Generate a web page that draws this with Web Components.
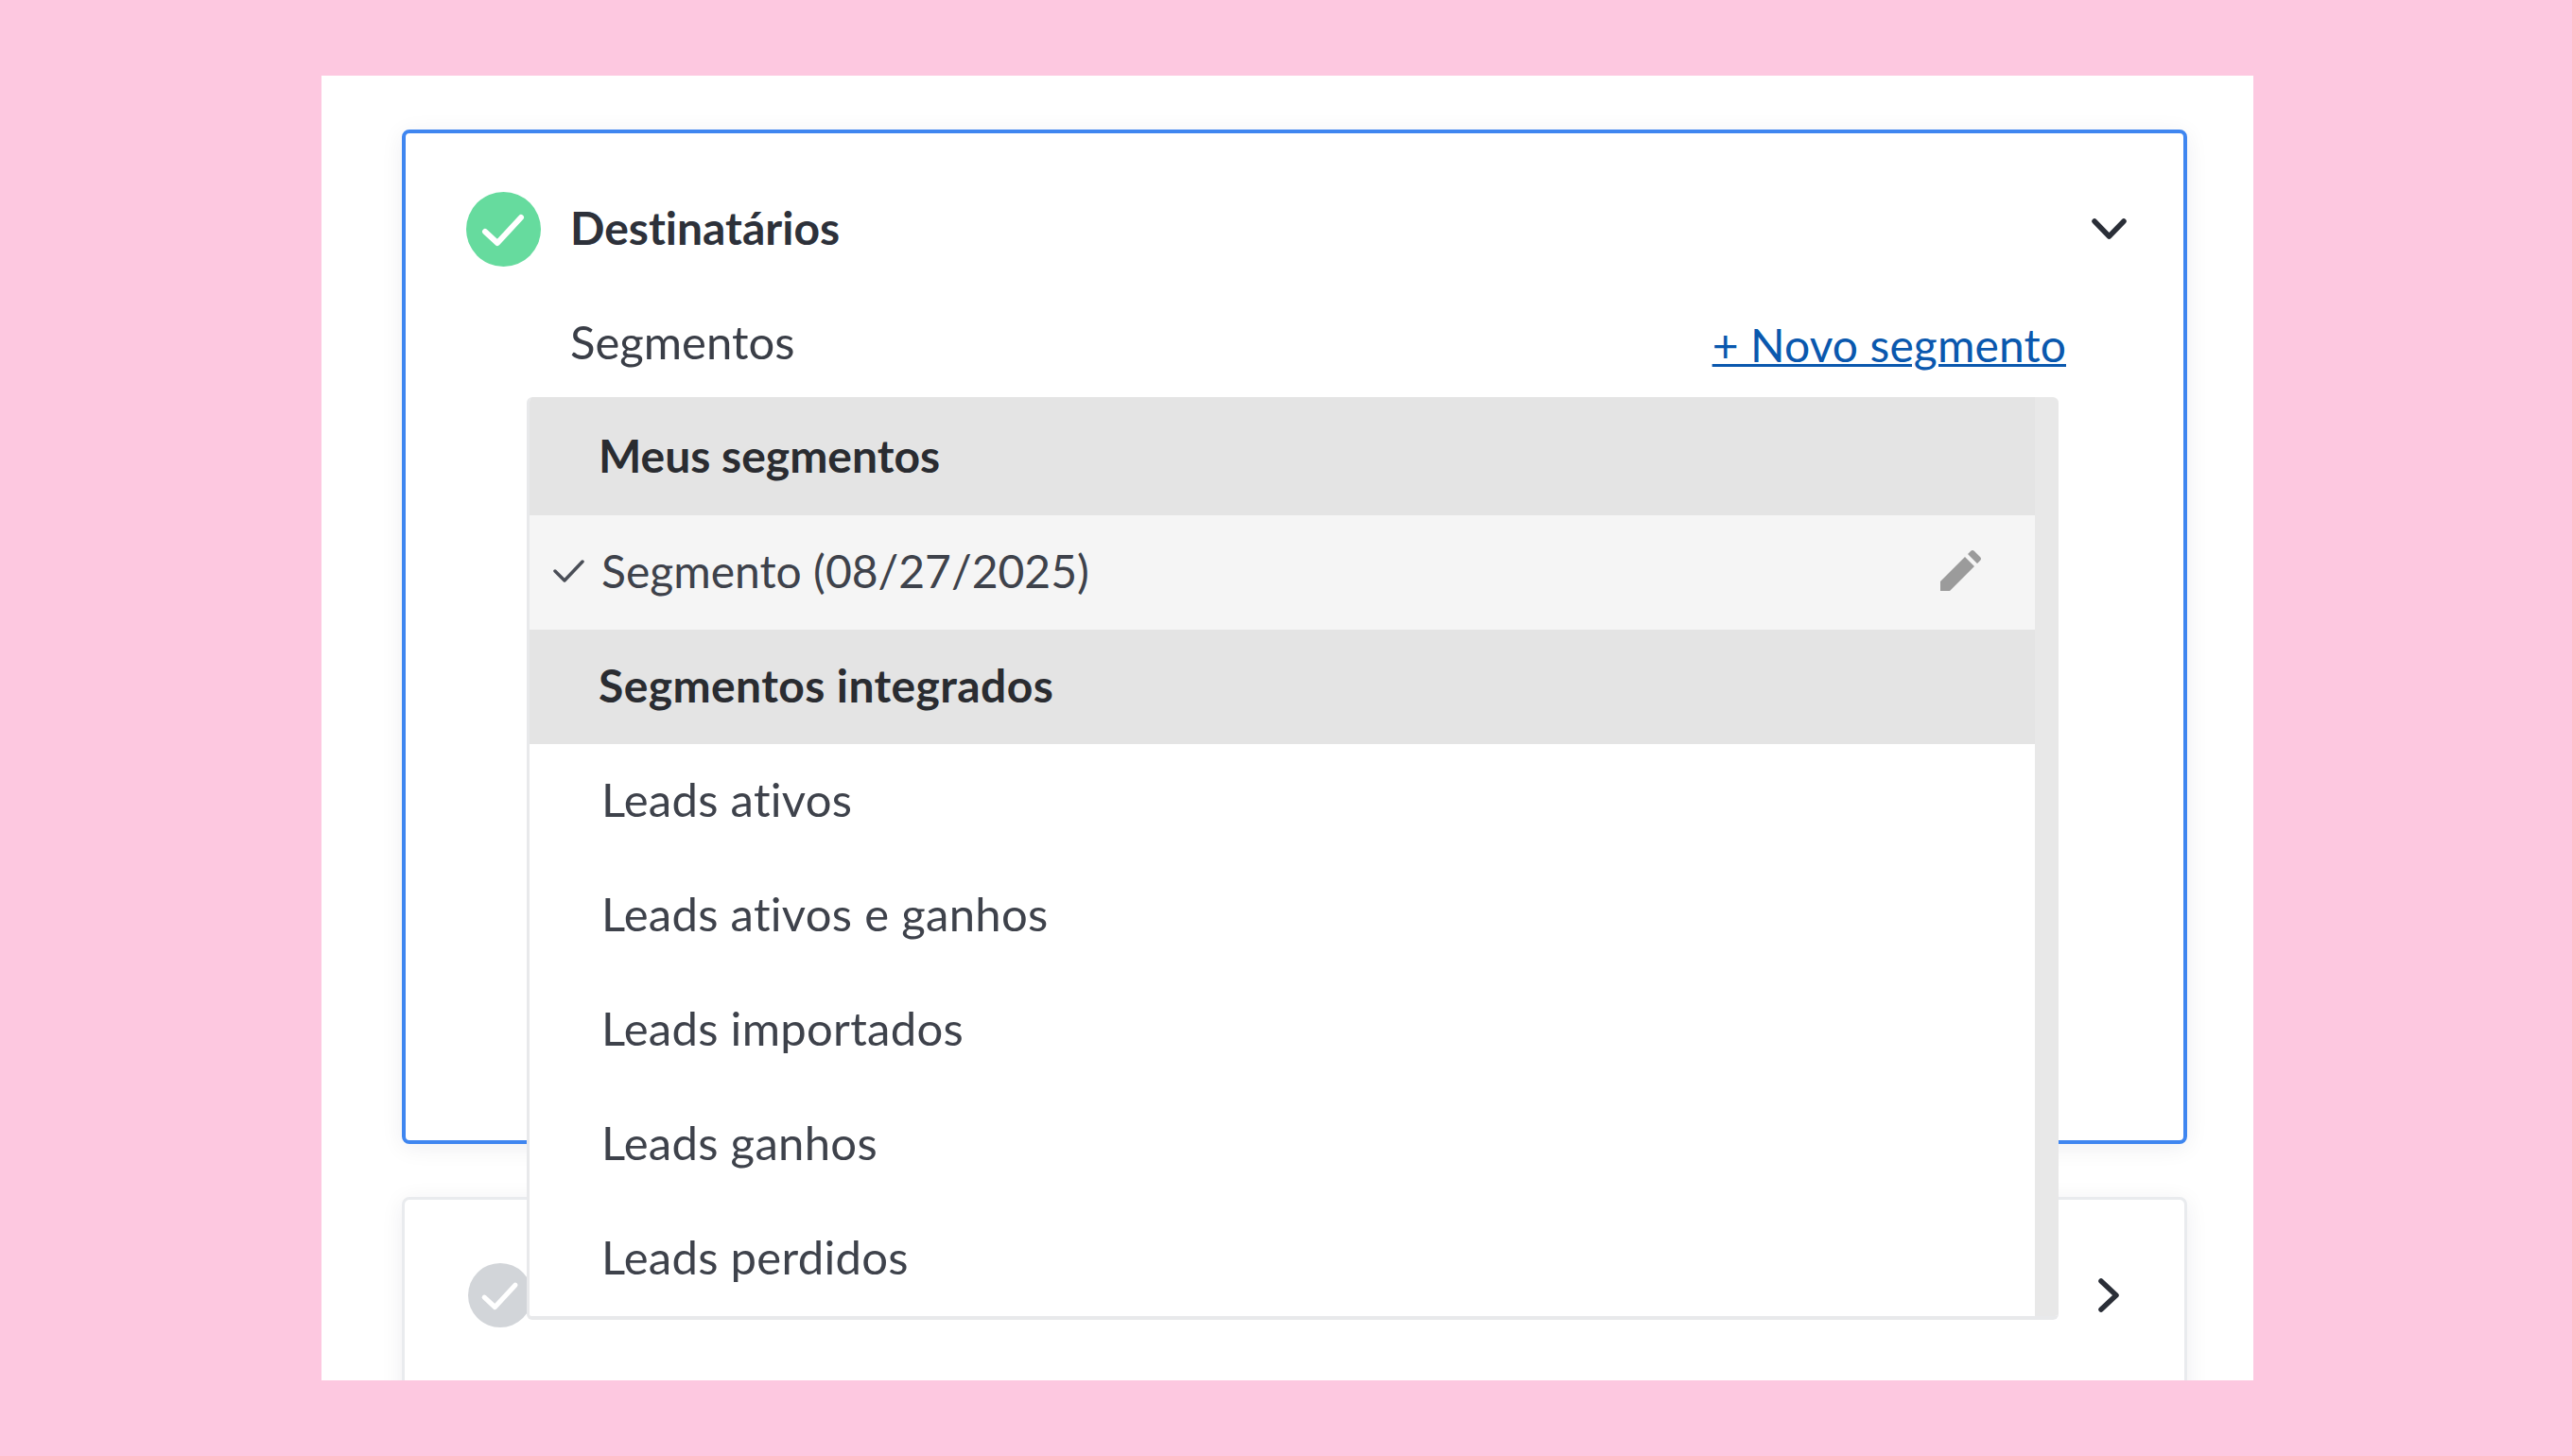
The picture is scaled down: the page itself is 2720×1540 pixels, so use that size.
<!DOCTYPE html>
<html lang="pt-BR">
<head>
<meta charset="utf-8">
<title>Destinatários</title>
<style>
html, body { margin: 0; height: 100%; }
body {
  background: #fdc8e0;
  font-family: Lato, "Noto Sans", sans-serif;
  font-variant-ligatures: none;
  color: #30343c;
  overflow: hidden;
}
</style>
</head>
<body>
<app-panel>
  <step-card active title-text="Destinatários" status="done">
    <section-row label="Segmentos" link="+ Novo segmento"></section-row>
    <segment-menu slot="overlay">
      <menu-header>Meus segmentos</menu-header>
      <menu-item selected editable>Segmento (08/27/2025)</menu-item>
      <menu-header wide>Segmentos integrados</menu-header>
      <menu-item>Leads ativos</menu-item>
      <menu-item>Leads ativos e ganhos</menu-item>
      <menu-item>Leads importados</menu-item>
      <menu-item>Leads ganhos</menu-item>
      <menu-item>Leads perdidos</menu-item>
    </segment-menu>
  </step-card>
  <step-card status="idle"></step-card>
</app-panel>

<script>
// small helper so every element stamps its own template in an open root
function tpl(html) {
  const t = document.createElement('template')
  t.innerHTML = html
  return t
}

const panelTpl = tpl(`
<style>
:host { display: block; box-sizing: border-box; height: 1540px; padding: 80px 337px 80px 340px; }
.panel {
  background: #fff;
  height: 100%;
  box-sizing: border-box;
  padding: 57px 70px 0 85px;
  overflow: hidden;
  display: flex;
  flex-direction: column;
  gap: 56px;
}
</style>
<div class="panel"><slot></slot></div>
`)

class AppPanel extends HTMLElement {
  constructor() {
    super()
    this.attachShadow({ mode: 'open' }).appendChild(panelTpl.content.cloneNode(true))
  }
}

const cardTpl = tpl(`
<style>
:host {
  display: block;
  position: relative;
  flex: none;
  box-sizing: border-box;
  border: 3px solid #e9ebee;
  border-radius: 8px;
  background: #fff;
  box-shadow: 0 4px 24px rgba(20, 30, 50, .07);
  height: 600px;
  padding: 63px 61px 0 65px;
}
:host([active]) {
  border: 4px solid #3f86f0;
  height: 1073px;
  z-index: 1;
  padding: 62px 60px 0 64px;
}
.head { display: flex; align-items: center; height: 79px; }
.badge { flex: none; width: 79px; height: 79px; }
h2 {
  flex: 1;
  margin: -5px 0 0 31px;
  font-size: 48px;
  font-weight: 700;
  color: #2d313a;
}
.chev { flex: none; width: 37px; height: 24px; margin-top: -2px; }
.chev path { fill: none; stroke: #2a2e37; stroke-width: 5.5; stroke-linecap: round; stroke-linejoin: round; }
:host(:not([active])) .head { height: 68px; padding-top: 4px; }
:host(:not([active])) .badge { width: 68px; height: 68px; margin-left: 2px; }
:host(:not([active])) .chev { width: 24px; height: 36px; margin-right: 7px; margin-top: 0; }
.overlay { position: absolute; left: 128px; top: 279px; z-index: 2; }
</style>
<div class="head">
  <svg class="badge" viewBox="0 0 79 79">
    <circle class="dot" cx="39.5" cy="39.5" r="39.5"/>
    <path d="M20 42 L33 54 L58 27" fill="none" stroke="#fff" stroke-width="6" stroke-linecap="round" stroke-linejoin="round"/>
  </svg>
  <h2></h2>
  <svg class="chev" viewBox="0 0 37 24"><path d="M3 4 L18.5 20 L34 4"/></svg>
</div>
<slot></slot>
<div class="overlay"><slot name="overlay"></slot></div>
`)

class StepCard extends HTMLElement {
  constructor() {
    super()
    this.attachShadow({ mode: 'open' }).appendChild(cardTpl.content.cloneNode(true))
  }
  connectedCallback() {
    const root = this.shadowRoot
    root.querySelector('h2').textContent = this.getAttribute('title-text')
    root.querySelector('.dot').setAttribute('fill', this.getAttribute('status') == 'done' ? '#66db9e' : '#d2d5d9')
    if (!this.hasAttribute('active')) {
      const chev = root.querySelector('.chev')
      chev.setAttribute('viewBox', '0 0 24 36')
      chev.querySelector('path').setAttribute('d', 'M4 3 L20 18 L4 33')
    }
  }
}

const rowTpl = tpl(`
<style>
:host { display: flex; justify-content: space-between; align-items: flex-start; margin: 50px 64px 0 110px; }
.label { font-size: 49px; color: #3a3e47; }
a { font-size: 48px; letter-spacing: .1px; margin-top: 4px; color: #0a58ae; text-decoration: underline; text-decoration-thickness: 3px; }
</style>
<span class="label"></span><a href="#"></a>
`)

class SectionRow extends HTMLElement {
  constructor() {
    super()
    this.attachShadow({ mode: 'open' }).appendChild(rowTpl.content.cloneNode(true))
  }
  connectedCallback() {
    this.shadowRoot.querySelector('.label').textContent = this.getAttribute('label')
    this.shadowRoot.querySelector('a').textContent = this.getAttribute('link')
  }
}

const menuTpl = tpl(`
<style>
:host {
  display: flex;
  box-sizing: border-box;
  width: 1620px;
  height: 976px;
  border-radius: 6px;
  overflow: hidden;
  background: #fff;
  border: solid #e8e9eb;
  border-width: 0 0 4px 3px;
}
.list { flex: 1; min-width: 0; }
.bar { flex: none; width: 25px; background: #e8e8e8; }
</style>
<div class="list"><slot></slot></div>
<div class="bar"></div>
`)

class SegmentMenu extends HTMLElement {
  constructor() {
    super()
    this.attachShadow({ mode: 'open' }).appendChild(menuTpl.content.cloneNode(true))
  }
}

const headerTpl = tpl(`
<style>
:host {
  display: flex;
  align-items: center;
  box-sizing: border-box;
  height: 121px;
  padding: 0 0 5px 73px;
  background: #e4e4e4;
  font-size: 48px;
  font-weight: 700;
  color: #2a2c31;
}
:host(:first-child) { height: 125px; padding: 1px 0 3px 73px; }
:host([wide]) { letter-spacing: .4px; }
</style>
<slot></slot>
`)

class MenuHeader extends HTMLElement {
  constructor() {
    super()
    this.attachShadow({ mode: 'open' }).appendChild(headerTpl.content.cloneNode(true))
  }
}

const itemTpl = tpl(`
<style>
:host {
  display: flex;
  align-items: center;
  box-sizing: border-box;
  height: 121px;
  padding: 0 0 5px 76px;
  font-size: 49px;
  letter-spacing: .3px;
  color: #3e424b;
}
:host([selected]) { background: #f5f5f5; padding-left: 25px; font-size: 48px; letter-spacing: 0; }
.text { flex: 1; }
.check, .pencil { display: none; }
:host([selected]) .check { display: block; width: 33px; height: 25px; margin-right: 18px; }
:host([editable]) .pencil { display: block; width: 43px; height: 43px; margin-right: 57px; }
</style>
<svg class="check" viewBox="0 0 33 25"><path d="M2 13 L12 23 L31 3" fill="none" stroke="#4a4e57" stroke-width="3.5" stroke-linecap="round" stroke-linejoin="round"/></svg>
<span class="text"><slot></slot></span>
<svg class="pencil" viewBox="0 0 43 43"><path d="M0 43 V33 L26 7 L36 17 L10 43 Z M29 4 L32 1 Q34 -1 36 1 L42 7 Q44 9 42 11 L39 14 Z" fill="#9b9b9b"/></svg>
`)

class MenuItem extends HTMLElement {
  constructor() {
    super()
    this.attachShadow({ mode: 'open' }).appendChild(itemTpl.content.cloneNode(true))
  }
}

window.customElements.define('app-panel', AppPanel)
window.customElements.define('step-card', StepCard)
window.customElements.define('section-row', SectionRow)
window.customElements.define('segment-menu', SegmentMenu)
window.customElements.define('menu-header', MenuHeader)
window.customElements.define('menu-item', MenuItem)
</script>
</body>
</html>
